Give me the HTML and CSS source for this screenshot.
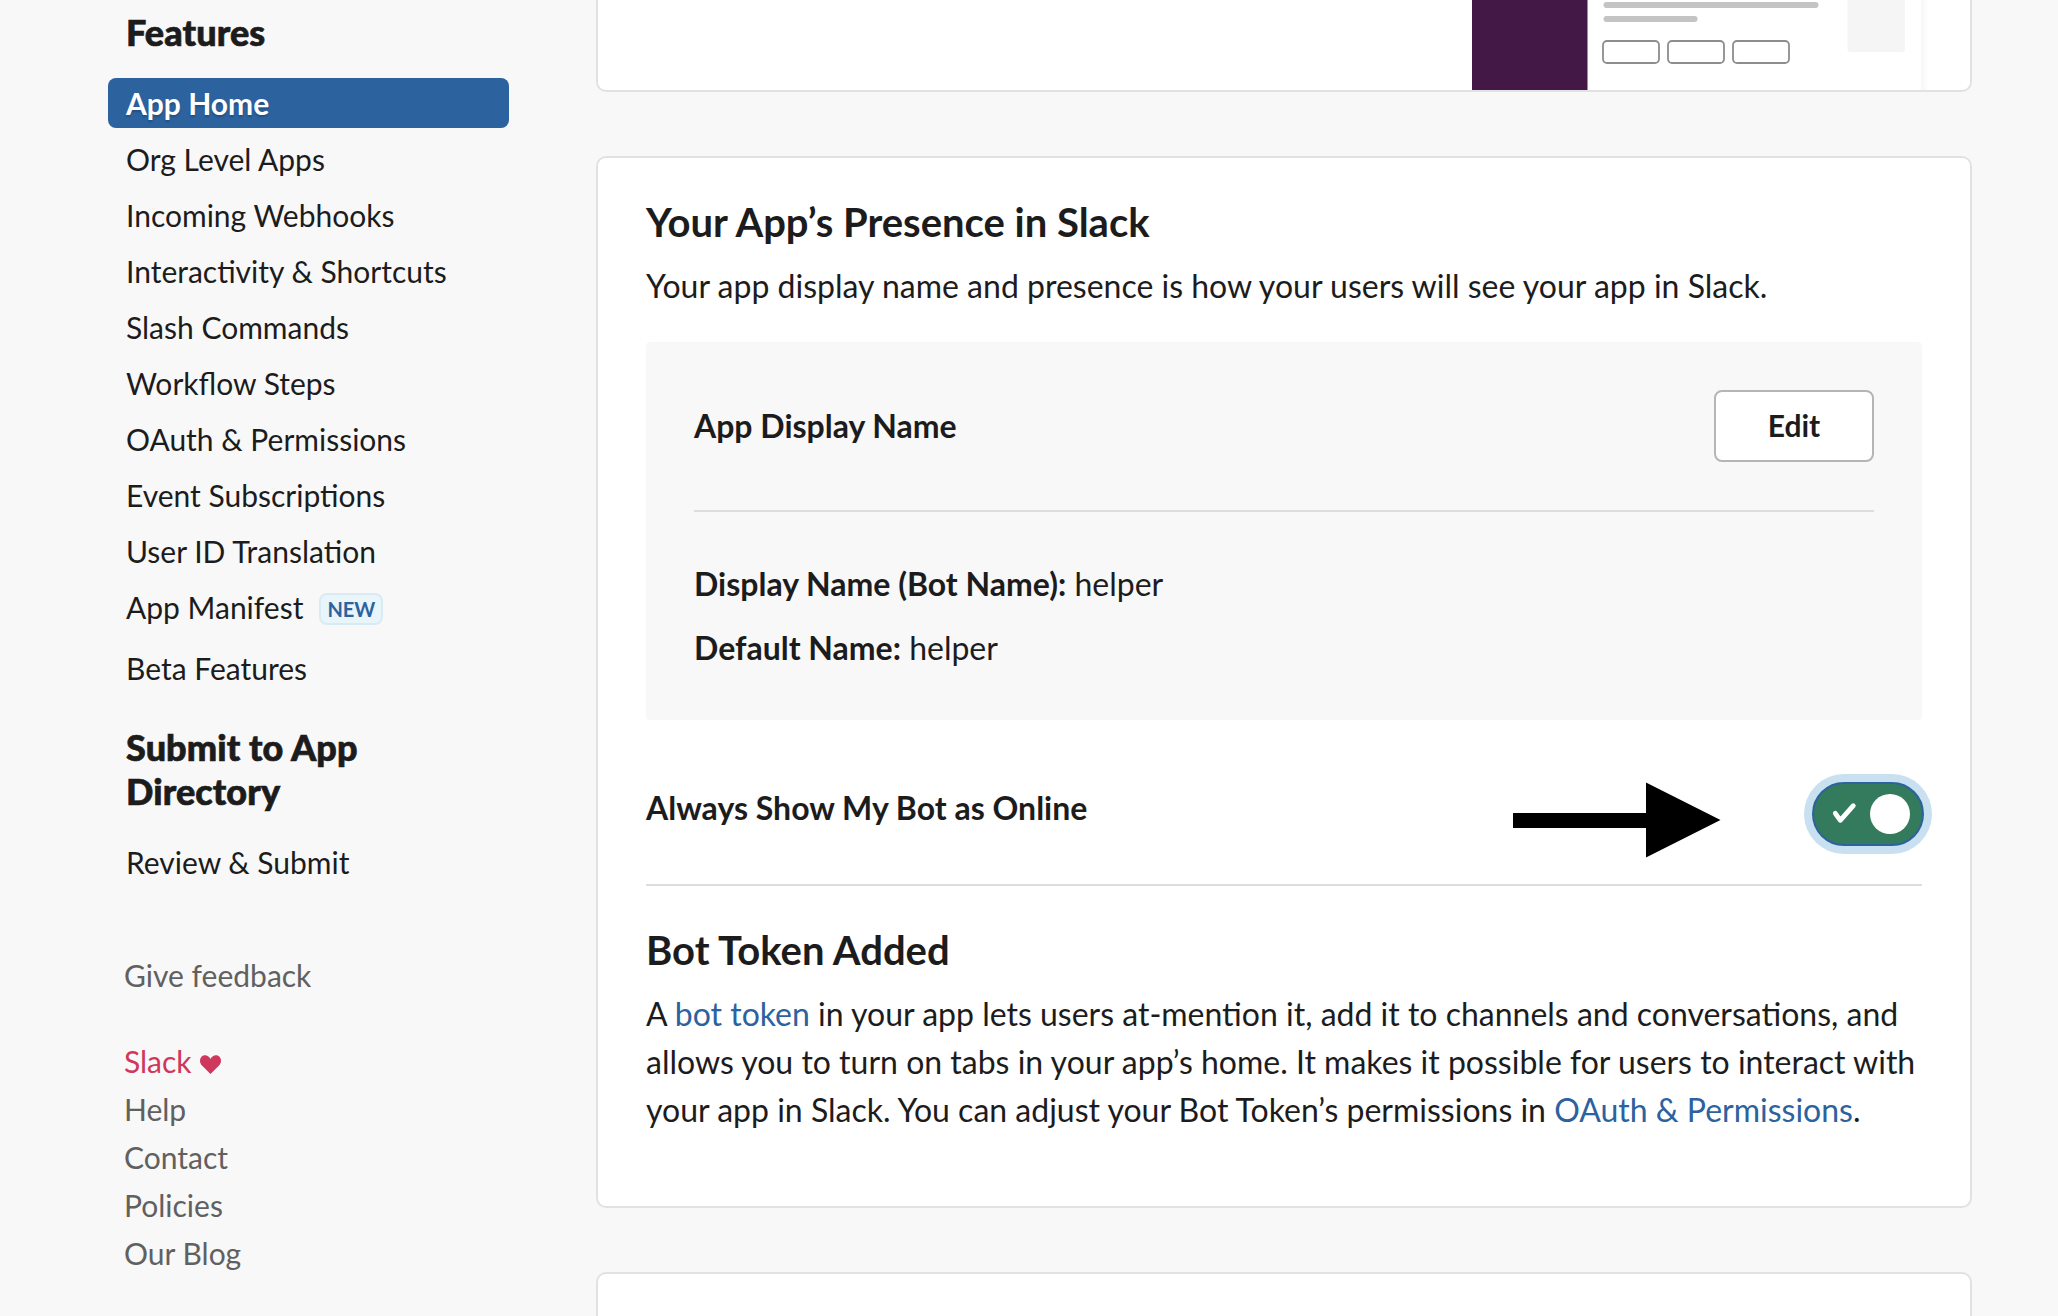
FILE: index.html
```html
<!DOCTYPE html>
<html lang="en">
<head>
<meta charset="utf-8">
<title>App Home</title>
<link rel="stylesheet" href="styles.css">
</head>
<body>
<div class="page">
  <aside class="sidebar">
    <h3 class="nav-heading">Features</h3>
    <nav class="nav">
      <a class="nav-item nav-item--active">App Home</a>
      <a class="nav-item">Org Level Apps</a>
      <a class="nav-item">Incoming Webhooks</a>
      <a class="nav-item">Interactivity &amp; Shortcuts</a>
      <a class="nav-item">Slash Commands</a>
      <a class="nav-item">Workflow Steps</a>
      <a class="nav-item">OAuth &amp; Permissions</a>
      <a class="nav-item">Event Subscriptions</a>
      <a class="nav-item">User ID Translation</a>
      <a class="nav-item nav-item--badged">App Manifest <span class="badge">NEW</span></a>
      <a class="nav-item">Beta Features</a>
    </nav>
    <h3 class="nav-heading nav-heading--submit">Submit to App Directory</h3>
    <nav class="nav">
      <a class="nav-item">Review &amp; Submit</a>
    </nav>
    <div class="links links--feedback"><a>Give feedback</a></div>
    <div class="links">
      <a class="link-slack">Slack
        <svg class="heart" viewBox="0 0 21 19"><path d="M10.500 19 1.700 10.200C-.6 7.800-.5 3.700 1.700 1.600 4.200-.7 8.200-.4 10.500 3.900 12.800-.4 16.800-.7 19.300 1.600 21.500 3.700 21.600 7.800 19.300 10.200Z" fill="currentColor"/></svg>
      </a>
      <a>Help</a>
      <a>Contact</a>
      <a>Policies</a>
      <a>Our Blog</a>
    </div>
  </aside>

  <main class="main">
    <section class="card card--preview">
      <svg class="preview" viewBox="0 0 464 90">
        <defs>
          <linearGradient id="edge" x1="0" x2="1" y1="0" y2="0">
            <stop offset="0" stop-color="#f7f7f7"/>
            <stop offset="1" stop-color="#ffffff"/>
          </linearGradient>
        </defs>
        <rect x="0" y="0" width="115.500" height="90" fill="#441846"/>
        <rect x="131.500" y="2" width="215" height="6" rx="3" fill="#c4c4c4"/>
        <rect x="131.500" y="16" width="94" height="6" rx="3" fill="#c4c4c4"/>
        <g fill="#fff" stroke="#8d8d8d" stroke-width="1.800">
          <rect x="131" y="41" width="56" height="22" rx="4"/>
          <rect x="196" y="41" width="56" height="22" rx="4"/>
          <rect x="261" y="41" width="56" height="22" rx="4"/>
        </g>
        <rect x="375.500" y="-10" width="57.500" height="62" rx="3" fill="#f5f5f5"/>
        <rect x="449" y="0" width="8" height="90" fill="url(#edge)"/>
      </svg>
    </section>

    <section class="card card--presence">
      <h2 class="title">Your App’s Presence in Slack</h2>
      <p class="text">Your app display name and presence is how your users will see your app in Slack.</p>
      <div class="panel">
        <div class="panel-head">
          <strong>App Display Name</strong>
          <button class="button">Edit</button>
        </div>
        <div class="panel-body">
          <p class="text"><strong>Display Name (Bot Name):</strong> helper</p>
          <p class="text"><strong>Default Name:</strong> helper</p>
        </div>
      </div>
      <div class="online">
        <strong class="online-label">Always Show My Bot as Online</strong>
        <svg class="arrow" viewBox="0 0 208 76"><path d="M0 31H133V.5L207.500 38 133 75.500V46H0Z"/></svg>
        <div class="toggle">
          <svg class="check" viewBox="0 0 28 24"><path d="M4.300 11.300 9.300 18.300 22.300 3.700" fill="none" stroke="#fff" stroke-width="4.800" stroke-linecap="round" stroke-linejoin="round"/></svg>
          <span class="knob"></span>
        </div>
      </div>
      <h2 class="title">Bot Token Added</h2>
      <p class="text">A <a class="link">bot token</a> in your app lets users at-mention it, add it to channels and conversations, and allows you to turn on tabs in your app’s home. It makes it possible for users to interact with your app in Slack. You can adjust your Bot Token’s permissions in <a class="link">OAuth &amp; Permissions</a>.</p>
    </section>

    <section class="card card--next"></section>
  </main>
</div>
</body>
</html>
```

FILE: styles.css
```css
* {
  box-sizing: border-box;
}

body {
  margin: 0;
  background: #f8f8f8;
  color: #1d1c1d;
  font: 32px/48px Lato, sans-serif;
}

h2, h3, p {
  margin: 0;
}

.page {
  display: flex;
  height: 1316px;
  overflow: hidden;
}

/* Sidebar */
.sidebar {
  flex: none;
  width: 401px;
  margin-left: 108px;
  padding-top: 10px;
  font-size: 30px;
}

.nav-heading {
  padding: 0 100px 0 18px;
  margin-bottom: 24px;
  font-size: 36px;
  font-weight: 900;
  letter-spacing: 0.1px;
  line-height: 44px;
  -webkit-text-stroke: 0.7px currentColor;
}

.nav-heading--submit {
  margin-top: 32px;
}

.nav {
  display: flex;
  flex-direction: column;
  gap: 6px;
}

.nav-item {
  display: flex;
  align-items: center;
  height: 50px;
  padding: 0 18px;
  border-radius: 8px;
}

.nav-item--active {
  background: #2c629e;
  color: #fff;
  font-weight: 700;
  text-shadow: 0 2px 2px rgba(0, 0, 0, 0.2);
}

.nav-item--badged {
  margin-bottom: 5px;
}

.badge {
  width: 64px;
  height: 32px;
  margin: 4px 0 0 16px;
  border: 2px solid #d8ebf5;
  border-radius: 8px;
  background: #e8f5fa;
  color: #2c629e;
  font-size: 20px;
  font-weight: 700;
  line-height: 29px;
  text-align: center;
}

.links {
  display: flex;
  flex-direction: column;
  padding-left: 16px;
  color: #616061;
}

.links--feedback {
  margin: 64px 0 38px;
}

.link-slack {
  display: flex;
  align-items: center;
  gap: 8px;
  color: #cf375c;
}

.heart {
  width: 21px;
  height: 19px;
  margin-top: 6px;
}

/* Main column */
.main {
  flex: none;
  display: flex;
  flex-direction: column;
  gap: 64px;
  width: 1376px;
  margin-left: 87px;
}

.card {
  flex: none;
  border: 2px solid #e2e2e2;
  border-radius: 10px;
  background: #fff;
}

.card--preview {
  display: flex;
  justify-content: flex-end;
  height: 92px;
  padding-right: 34px;
  border-top: 0;
  border-radius: 0 0 10px 10px;
}

.preview {
  width: 464px;
  height: 90px;
}

.card--presence {
  height: 1052px;
  padding: 38px 48px 0;
}

.card--next {
  height: 100px;
}

.title {
  margin-bottom: 14px;
  font-size: 40px;
  font-weight: 700;
  line-height: 52px;
}

.link {
  color: #2c629e;
}

.panel {
  height: 378px;
  margin-top: 32px;
  padding: 48px;
  border-radius: 4px;
  background: #f8f8f8;
}

.panel-head {
  display: flex;
  align-items: center;
  justify-content: space-between;
  padding-bottom: 48px;
  border-bottom: 2px solid #dddddd;
}

.button {
  width: 160px;
  height: 72px;
  padding: 0 0 2px;
  border: 2px solid #b5b5b5;
  border-radius: 8px;
  background: #fff;
  color: #1d1c1d;
  font: 700 30px/48px Lato, sans-serif;
}

.panel-body {
  display: flex;
  flex-direction: column;
  gap: 16px;
  padding-top: 48px;
}

.online {
  display: flex;
  align-items: flex-start;
  height: 166px;
  margin-bottom: 38px;
  padding-top: 62px;
  border-bottom: 2px solid #dddddd;
}

.online-label {
  flex: 1;
  padding-top: 2px;
}

.arrow {
  width: 208px;
  height: 76px;
  margin-right: 91px;
}

.toggle {
  display: flex;
  align-items: center;
  justify-content: space-between;
  width: 112px;
  height: 64px;
  margin-right: -2px;
  padding: 0 12px 0 17px;
  border: 2px solid #2c629e;
  border-radius: 32px;
  background: #347a5c;
  box-shadow: 0 0 0 8px #c9e0f0;
}

.check {
  width: 28px;
  height: 24px;
}

.knob {
  width: 40px;
  height: 40px;
  border-radius: 50%;
  background: #fff;
}
```
